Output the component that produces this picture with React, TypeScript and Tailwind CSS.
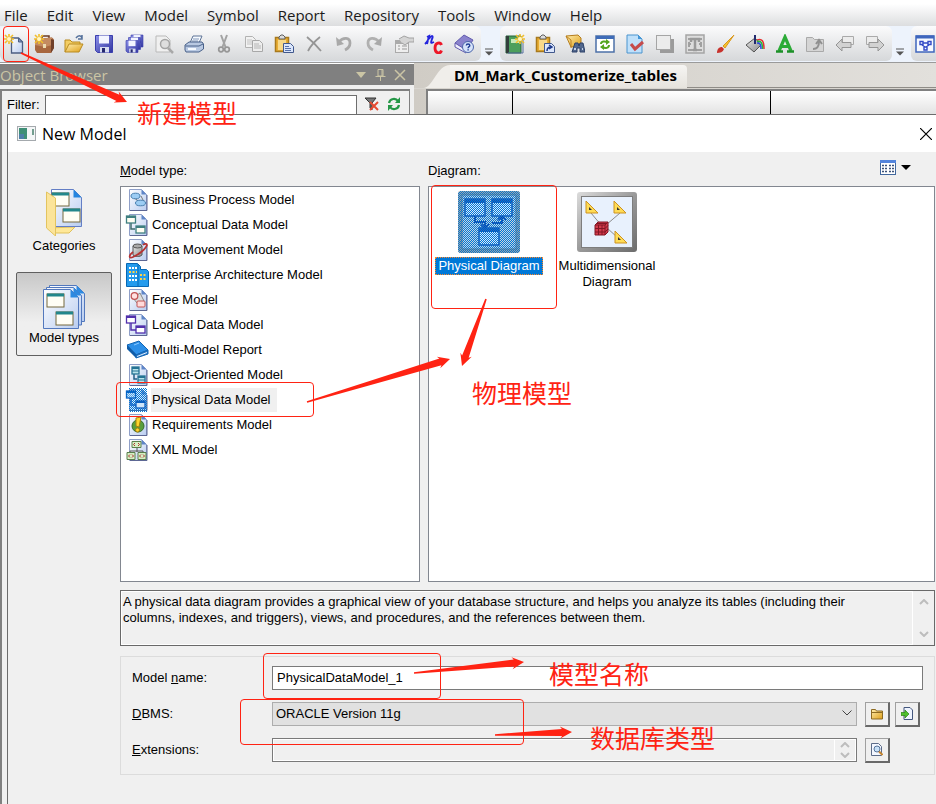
import React from "react";

type IconProps = { children: React.ReactNode; size?: string };

function Icon({ children, size = "size-5" }: IconProps) {
  return (
    <svg viewBox="0 0 20 20" className={`${size} block shrink-0`} fill="none" aria-hidden="true">
      {children}
    </svg>
  );
}

/* Shared gradients and dither patterns */
function Defs() {
  return (
    <svg className="absolute size-0" aria-hidden="true">
      <defs>
        <linearGradient id="paper" x1="0" y1="0" x2="1" y2="1">
          <stop offset="0" stopColor="#ffffff" />
          <stop offset="1" stopColor="#b9cdf0" />
        </linearGradient>
        <linearGradient id="gold" x1="0" y1="0" x2="1" y2="1">
          <stop offset="0" stopColor="#ffeeb0" />
          <stop offset="1" stopColor="#dfa019" />
        </linearGradient>
        <linearGradient id="violet" x1="0" y1="0" x2="1" y2="1">
          <stop offset="0" stopColor="#8f93ea" />
          <stop offset="1" stopColor="#3034a0" />
        </linearGradient>
        <linearGradient id="silver" x1="0" y1="0" x2="1" y2="1">
          <stop offset="0" stopColor="#e8e8e8" />
          <stop offset="1" stopColor="#8c8c8c" />
        </linearGradient>
        <linearGradient id="frame" x1="0" y1="0" x2="1" y2="1">
          <stop offset="0" stopColor="#dcdcdc" />
          <stop offset="0.5" stopColor="#9a9a9a" />
          <stop offset="1" stopColor="#6c6c6c" />
        </linearGradient>
        <pattern id="dither" width="2" height="2" patternUnits="userSpaceOnUse">
          <rect width="1" height="1" fill="#0078d7" />
          <rect x="1" y="1" width="1" height="1" fill="#0078d7" />
        </pattern>
      </defs>
    </svg>
  );
}

const Spark = ({ x = 5, y = 5 }: { x?: number; y?: number }) => (
  <g transform={`translate(${x} ${y})`}>
    <path d="M0-5V5M-5 0H5M-4-4L4 4M4-4L-4 4" stroke="#f2bf2c" strokeWidth="1.6" />
    <circle r="2" fill="#fff6c4" />
  </g>
);

const NewModel = () => (
  <Icon>
    <path d="M7.500 4h7l4 4v11h-11z" fill="url(#paper)" stroke="#4c5f83" strokeWidth="1.300" />
    <path d="M14.500 4v4h4z" fill="#7e95c0" stroke="#4c5f83" />
    <Spark />
  </Icon>
);
const Briefcase = () => (
  <Icon>
    <path d="M8 4V2h7v2" stroke="#6b3820" strokeWidth="1.500" />
    <path d="M1 5l17-1.500 2 2V14l-3 5H3l-2-3z" fill="#a8673f" />
    <path d="M1 5l17-1.500V11l-7 2-10-2z" fill="#c48a60" />
    <path d="M17 5l3 1v8l-3 5z" fill="#70402a" />
    <rect x="9" y="10" width="3" height="4" fill="#ecd9b0" />
    <Spark x={5} y={5} />
  </Icon>
);
const OpenFolder = () => (
  <Icon>
    <path d="M1 18V6h5l2 2h8v3" fill="#f3cd63" stroke="#b98b20" />
    <path d="M1 18L5 10h14l-4 8z" fill="url(#gold)" stroke="#b98b20" />
    <path d="M12 4c2-3 5-3 6 0m0-3v4h-4" stroke="#55719c" strokeWidth="1.500" />
  </Icon>
);
const Floppy = ({ s = 1, x = 0, y = 0 }: { s?: number; x?: number; y?: number }) => (
  <g transform={`translate(${x} ${y}) scale(${s})`}>
    <path d="M1.500 1.500h17v17h-15l-2-2z" fill="url(#violet)" stroke="#3b3fae" />
    <rect x="5" y="1.500" width="10" height="8" fill="#f3f5ff" />
    <rect x="6" y="13" width="9" height="5.500" fill="#d7dcf0" />
    <rect x="8" y="14" width="3" height="4.500" fill="#25286f" />
  </g>
);
const Save = () => <Icon><Floppy /></Icon>;
const SaveAll = () => (
  <Icon>
    <Floppy s={0.7} x={6} y={0} />
    <Floppy s={0.7} x={3.5} y={2.5} />
    <Floppy s={0.7} x={1} y={5.5} />
  </Icon>
);
const Preview = () => (
  <Icon>
    <path d="M2 2h10l4 4v12H2z" fill="#f0f0f0" stroke="#b9b9b9" />
    <circle cx="11" cy="10" r="4.500" fill="#dedede" stroke="#a4a4a4" strokeWidth="1.500" />
    <path d="M14 14l5 5" stroke="#a8a8a8" strokeWidth="2.500" />
  </Icon>
);
const Printer = () => (
  <Icon>
    <path d="M6 9l3-7h9l-3 7z" fill="#f6faff" stroke="#5d7396" />
    <path d="M8 7h6M9 5h6" stroke="#8196b8" />
    <path d="M1 11l4-3h13l1.500 2v5L15 18H2l-1-2z" fill="#b9c9e2" stroke="#496189" />
    <path d="M1.500 12H15l4-2" stroke="#496189" />
    <path d="M4 15h8" stroke="#f6faff" strokeWidth="2" />
  </Icon>
);
const Cut = () => (
  <Icon>
    <path d="M7 1l4.500 12M13 1L8.500 13" stroke="#a3a3a3" strokeWidth="2" />
    <circle cx="7" cy="15.500" r="2.300" stroke="#979797" strokeWidth="1.700" />
    <circle cx="13" cy="15.500" r="2.300" stroke="#979797" strokeWidth="1.700" />
  </Icon>
);
const Copy = () => (
  <Icon>
    <path d="M1.500 2.500h7l3 3v8h-10z" fill="#f2f2f2" stroke="#b2b2b2" />
    <path d="M3 6h5M3 8h5M3 10h5" stroke="#c2c2c2" />
    <path d="M8.500 6.500h7l3 3v8h-10z" fill="#ededed" stroke="#a8a8a8" />
    <path d="M10 10h5M10 12h7M10 14h7" stroke="#b5b5b5" />
  </Icon>
);
const Paste = ({ link = false }: { link?: boolean }) => (
  <Icon>
    <path d="M1.500 3.500h13v14h-13z" fill="#e9ae35" stroke="#a87a1d" strokeWidth="1.500" />
    <path d="M4 6h8v10H4z" fill="#f8d98a" />
    <path d="M5 5V3l2-2h2l2 2v2z" fill="#dcdcdc" stroke="#5f5f5f" />
    <path d="M9.500 9.500h7l3 3v6h-10z" fill="#dbe6fb" stroke="#41588c" />
    {link ? (
      <path d="M12 17c0-3 1-4 4-4m-2-2l3 2-3 2" stroke="#203b8c" strokeWidth="1.500" />
    ) : (
      <path d="M11 12.500h4M11 14.500h6M11 16.500h6" stroke="#5872ab" />
    )}
  </Icon>
);
const Delete = () => (
  <Icon>
    <path d="M3 3c5 4 9 8 14 14M16 3C11 7 7 11 4 17" stroke="#959595" strokeWidth="1.800" />
  </Icon>
);
const Undo = () => (
  <Icon>
    <path d="M5 8c4-5 11-5 11 1 0 4-3 6-5 7" stroke="#a9a9a9" strokeWidth="2.800" />
    <path d="M2 3l1 9 7-2z" fill="#a9a9a9" />
  </Icon>
);
const Redo = () => (
  <Icon>
    <path d="M15 8C11 3 4 3 4 9c0 4 3 6 5 7" stroke="#b0b0b0" strokeWidth="2.800" />
    <path d="M18 3l-1 9-7-2z" fill="#a9a9a9" />
  </Icon>
);
const Properties = () => (
  <Icon>
    <rect x="1.500" y="6.500" width="13" height="12" fill="#eee" stroke="#aaa" />
    <path d="M2 8.500h12" stroke="#aaa" strokeWidth="3" />
    <path d="M4 12h2m2 0h5M4 15h2m2 0h5" stroke="#999" />
    <path d="M5 5l5-3 5 2h5v4h-5l-4 3-3-2" fill="#d5d5d5" stroke="#a3a3a3" />
  </Icon>
);
const NameCode = () => (
  <Icon>
    <path d="M1 10C3 8 5 4 5 2M3 3l2-1-2 8M5 5c2-4 5-4 3 0-1 3-2 5 2 3" stroke="#2424dd" strokeWidth="1.900" />
    <path d="M17.500 11c-1-3-6.500-3-6.500 3s5.500 6 6.500 2.500" stroke="#ed1728" strokeWidth="2.800" />
  </Icon>
);
const HelpBook = () => (
  <Icon>
    <path d="M1 9L10 1l9 5-7 11z" fill="#8a83cd" stroke="#625bae" />
    <path d="M1 9v4l11 6v-3z" fill="#eeeefc" stroke="#625bae" />
    <circle cx="14" cy="13" r="5.500" fill="#d6e3fa" stroke="#4c66aa" />
    <path d="M12.300 11.500c0-2 3.500-2 3.500 0 0 1.300-1.700 1-1.700 2.700m0 1v1.200" stroke="#213e97" strokeWidth="1.400" />
  </Icon>
);
const NewDiagram = () => (
  <Icon>
    <path d="M1 2h15v17H1z" fill="#4c9f5c" stroke="#24653a" />
    <path d="M1 2h3v17H1z" fill="#333e3a" />
    <path d="M6 5h8v4H6z" fill="#c6e8b8" />
    <path d="M16 4l2 2v13H3" stroke="#5670a0" />
    <Spark x={15} y={5} />
  </Icon>
);
const Find = () => (
  <Icon>
    <path d="M1 2l12-1 3 3v8l-10 1z" fill="url(#gold)" stroke="#b47d1e" />
    <path d="M1 2l5 4v8" stroke="#bd801e" />
    <path d="M7 18l3-9h3l1 3 1-3h3l2 9h-5v-4h-3v4z" fill="#52688e" stroke="#2c4168" />
    <path d="M9 15h2m6 0h1" stroke="#c3d1ea" strokeWidth="2" />
  </Icon>
);
const Refresh = () => (
  <Icon>
    <rect x="1" y="2" width="18" height="16" fill="#fff" stroke="#4c70a8" strokeWidth="1.500" />
    <path d="M1 3.500h18" stroke="#3f6cb8" strokeWidth="3" />
    <path d="M6 10c0-3 4-3 6-2m2 3c0 3-4 4-6 2" stroke="#55a620" strokeWidth="2" />
    <path d="M11 5l4 3-4 3zM9 10l-4 3 4 3z" fill="#55a620" />
  </Icon>
);
const Check = () => (
  <Icon>
    <path d="M2 1h11l4 4v14H2z" fill="#bfe0fa" stroke="#4a94ce" />
    <path d="M13 1v4h4z" fill="#4597d8" />
    <path d="M6 10l4 5 8-7" stroke="#c54b4b" strokeWidth="3" />
  </Icon>
);
const Shadow = () => (
  <Icon>
    <path d="M5 5h14v14H5z" fill="#9b9b9b" />
    <rect x="1.500" y="1.500" width="14" height="14" fill="#ececec" stroke="#a5a5a5" />
  </Icon>
);
const TextBox = () => (
  <Icon>
    <rect x="1" y="1" width="18" height="18" fill="#ddd" stroke="#a5a5a5" strokeWidth="1.500" />
    <path d="M3 5h14M3 16h14M4 8v5m12-5v5M3 10h3m8 0h3" stroke="#a0a0a0" strokeWidth="2" />
    <path d="M6 8V5h8v3m-4-3v11m-2 0h4" stroke="#9a9a9a" strokeWidth="2.500" />
  </Icon>
);
const Brush = () => (
  <Icon>
    <path d="M19 1L8 12l2 2z" fill="#f5c22f" stroke="#d9971b" />
    <path d="M2 19c0-4 2-6 5-6l2 2c-1 3-4 4-7 4z" fill="#c8322c" />
  </Icon>
);
const Bucket = () => (
  <Icon>
    <path d="M1 11l9-7 6 7-7 7z" fill="url(#silver)" stroke="#555" />
    <path d="M10 10V1" stroke="#222a6e" strokeWidth="2" />
    <path d="M12 6c5-2 7 1 7 9" stroke="#e53131" strokeWidth="1.500" />
    <path d="M12 7.500c4-1 5.500 1 5.500 7.500" stroke="#24b83d" strokeWidth="1.500" />
    <path d="M12 9c3 0 4 1 4 6" stroke="#2b49e0" strokeWidth="1.500" />
  </Icon>
);
const FontA = () => (
  <Icon>
    <path d="M4 17L10 3l6 14M6.500 12.500h7" stroke="#2cab37" strokeWidth="3.200" />
    <path d="M1 17.500h7m4 0h7" stroke="#1c9027" strokeWidth="2.400" />
  </Icon>
);
const FolderUp = () => (
  <Icon>
    <path d="M1.500 17.500v-14h6l2 2h9v12z" fill="#d5d5d5" stroke="#a9a9a9" />
    <path d="M8 15c5 0 6-3 6-8m-3 3l3-4 3 4" stroke="#909090" strokeWidth="2" />
  </Icon>
);
const BackArrow = ({ flip = false }: { flip?: boolean }) => (
  <Icon>
    <g transform={flip ? "translate(20 0) scale(-1 1)" : undefined}>
      <path d="M7.500 2.500h11v8h-11z" fill="#ececec" stroke="#aaa" />
      <path d="M1 11l6-6v3.500h9v5H7V17z" fill="#d2d2d2" stroke="#959595" />
    </g>
  </Icon>
);
const DiagramWindow = () => (
  <Icon>
    <rect x="1" y="2" width="18" height="16" fill="#f6f9ff" stroke="#3f66bd" strokeWidth="1.500" />
    <path d="M1 3h18" stroke="#3f66bd" strokeWidth="3" />
    <path d="M5 7.500h3v3H5zM13 7.500h3v3h-3zM9 13h3v3H9zM8 9h5m-6 2l3 2m4-2l-3 2" stroke="#334ac6" strokeWidth="1.400" />
  </Icon>
);

const mainTools: [string, React.ReactNode][] = [
  ["New Model", <NewModel />], ["New Project", <Briefcase />], ["Open", <OpenFolder />],
  ["Save", <Save />], ["Save All", <SaveAll />], ["Print Preview", <Preview />],
  ["Print", <Printer />], ["Cut", <Cut />], ["Copy", <Copy />], ["Paste", <Paste />],
  ["Delete", <Delete />], ["Undo", <Undo />], ["Redo", <Redo />],
  ["Properties", <Properties />], ["Name or Code", <NameCode />], ["Help", <HelpBook />],
];
const diagramTools: [string, React.ReactNode][] = [
  ["New Diagram", <NewDiagram />], ["Paste as Shortcut", <Paste link />], ["Find Objects", <Find />],
  ["Refresh", <Refresh />], ["Check Model", <Check />], ["Shadow", <Shadow />],
  ["Text Size", <TextBox />], ["Line Style", <Brush />], ["Fill", <Bucket />],
  ["Font", <FontA />], ["Up One Level", <FolderUp />], ["Previous", <BackArrow />],
  ["Next", <BackArrow flip />],
];

function ToolGroup({ tools, className }: { tools: [string, React.ReactNode][]; className: string }) {
  return (
    <div className={`flex h-[35px] shrink-0 items-center gap-2.5 rounded-md bg-linear-to-b from-[#fbfbfc] to-[#d6d8da] ${className}`}>
      {tools.map(([name, icon]) => (
        <button key={name} type="button" aria-label={name}>{icon}</button>
      ))}
    </div>
  );
}

function Overflow() {
  return (
    <button type="button" aria-label="More buttons" className="flex w-[19px] shrink-0 justify-center pt-[22px] pr-1">
      <svg viewBox="0 0 8 8" className="size-2" aria-hidden="true">
        <path d="M0 1h8" stroke="#555" />
        <path d="M0 3.500h8L4 7.500z" fill="#555" />
      </svg>
    </button>
  );
}

/* Model-type list icons, drawn on a 24x24 grid */
const Page = () => (
  <>
    <path d="M4.500 1.500h12l5 5v16h-17z" fill="url(#paper)" stroke="#8f9fc8" />
    <path d="M16.500 1.500v5h5z" fill="#5f86c8" />
    <path d="M5 22.500h17V7" stroke="#5d6794" />
  </>
);
const Win = ({ x, y, w = 9, h = 7, c = "#3f7f80", f = "#fffef2" }: { x: number; y: number; w?: number; h?: number; c?: string; f?: string }) => (
  <>
    <rect x={x} y={y} width={w} height={h} fill={f} stroke={c} strokeWidth="1.300" />
    <path d={`M${x} ${y + 1}h${w}`} stroke={c} strokeWidth="2" />
  </>
);

const modelTypes: { name: string; icon: React.ReactNode }[] = [
  {
    name: "Business Process Model",
    icon: <><Page /><path d="M8 9l8 6M16 8l3 6-7 1" stroke="#777" /><ellipse cx="10.500" cy="8" rx="4.500" ry="2.800" fill="#9ccdf4" stroke="#477fae" /><ellipse cx="15.500" cy="15" rx="5" ry="2.800" fill="#9ccdf4" stroke="#477fae" /></>,
  },
  {
    name: "Conceptual Data Model",
    icon: <><Page /><path d="M6 9v7h4" stroke="#3f6c6c" strokeWidth="1.500" /><Win x={1.5} y={3} /><Win x={11} y={13} /></>,
  },
  {
    name: "Data Movement Model",
    icon: <><Page /><path d="M8 8v9c2 2 7 2 9 0V8z" fill="url(#silver)" stroke="#555" /><ellipse cx="12.500" cy="8" rx="4.500" ry="2" fill="#aaa" stroke="#555" /><path d="M8 14c-5 4-4 7 0 5 5-2 13-8 14-12 0-2-3-1-4 0" stroke="#b63232" strokeWidth="1.700" /></>,
  },
  {
    name: "Enterprise Architecture Model",
    icon: <><path d="M1.500.500h11l3 3v3h6l2 2v15h-22z" fill="#249bed" stroke="#0868b4" /><path d="M13 1v22" stroke="#0868b4" /><path d="M4 5h8M4 13h8M4 17h8" stroke="#fff" strokeWidth="2" strokeDasharray="2 1" /><path d="M4 9h8M15 12h7M15 16h7" stroke="#ffd449" strokeWidth="2" strokeDasharray="2 1.500" /></>,
  },
  {
    name: "Free Model",
    icon: <><Page /><path d="M15 5l4 8-7 2-4-5z" fill="#ddd" stroke="#888" /><circle cx="9.500" cy="8" r="3.300" fill="#ffe1e1" stroke="#c25454" strokeWidth="1.300" /><rect x="12" y="13" width="8" height="6" rx="1" fill="#ffdada" stroke="#c25454" /></>,
  },
  {
    name: "Logical Data Model",
    icon: <><Page /><path d="M6 9v8h5" stroke="#5130ac" strokeWidth="1.500" /><Win x={1.5} y={3} c="#5130ac" f="#fff" /><Win x={11} y={13} c="#5130ac" f="#fff" /></>,
  },
  {
    name: "Multi-Model Report",
    icon: <><path d="M2 7l12-4 9 9-12 5z" fill="#2c8fe8" stroke="#1265b3" /><path d="M2 7v4l9 9v-4z" fill="#0f5ca8" /><path d="M11 17l12-5v4l-12 4z" fill="#2476c8" stroke="#1265b3" /><path d="M12 18.500l10-4" stroke="#e5effa" /><path d="M9 7l5-2" stroke="#8fcbff" /></>,
  },
  {
    name: "Object-Oriented Model",
    icon: <><Page /><path d="M9 11v5h3" stroke="#235f86" strokeWidth="1.500" /><Win x={7} y={4} w={7} h={7} c="#257394" f="#b9e3ea" /><path d="M7 8h7" stroke="#257394" /><Win x={13} y={13} w={7} h={7} c="#257394" f="#b9e3ea" /><path d="M13 17h7" stroke="#257394" /></>,
  },
  {
    name: "Physical Data Model",
    icon: <><Page /><path d="M6 9v8h5" stroke="#1d4fb8" strokeWidth="1.500" /><rect x="4" y="0" width="18" height="24" fill="url(#dither)" /><Win x={1.5} y={3} c="#0a5fc0" f="#cfe5fa" /><Win x={11} y={13} c="#0a5fc0" f="#cfe5fa" /><rect x="1" y="3" width="10" height="7" fill="url(#dither)" opacity="0.600" /></>,
  },
  {
    name: "Requirements Model",
    icon: <><Page /><circle cx="13" cy="13" r="6" fill="#5a9e3c" stroke="#376c2c" /><path d="M11 5l5-1-2 10-3-1z" fill="#ffd52e" stroke="#a9810d" /><circle cx="12.500" cy="17" r="2" fill="#ffd52e" stroke="#a9810d" /></>,
  },
  {
    name: "XML Model",
    icon: <><Page /><path d="M12 9v5m-7 1v-2h13v2" stroke="#555" /><path d="M7 3.500h9v6H7zM2 14.500h8v7H2zM13 14.500h8v7h-8z" fill="#d6f0c4" stroke="#5a7f4c" /><path d="M10 5L8.500 6.500 10 8m3-3l1.500 1.500L13 8M5 16.500L3.500 18 5 19.500m2-3L8.500 18 7 19.500m9-3L14.500 18l1.500 1.500m2-3l1.500 1.500-1.500 1.500" stroke="#b03030" /></>,
  },
];

function PhysicalPicture() {
  return (
    <svg viewBox="0 0 62 62" className="size-[62px]" fill="none" aria-hidden="true">
      <rect width="62" height="62" rx="3" fill="#a3a3a3" />
      <rect x="4" y="4" width="54" height="54" fill="#c7d3df" stroke="#808080" />
      <path d="M17 25v6h10v6M34 32h10v-7M40 29l4-4 4 4M23 33l4 4 4-4" stroke="#1940a5" strokeWidth="2" />
      {[[7, 8], [34, 8], [21, 37]].map(([x, y]) => (
        <g key={`${x}-${y}`}>
          <rect x={x} y={y} width="20" height="17" fill="#d8e8fb" stroke="#1646a8" strokeWidth="1.500" />
          <path d={`M${x} ${y + 2}h20`} stroke="#1b4fae" strokeWidth="4" />
        </g>
      ))}
      <rect width="62" height="62" rx="3" fill="url(#dither)" />
    </svg>
  );
}

function MultiPicture() {
  return (
    <svg viewBox="0 0 62 62" className="size-[62px]" fill="none" aria-hidden="true">
      <rect x="1" y="1" width="60" height="60" rx="3" fill="url(#frame)" />
      <rect x="5.500" y="5.500" width="51" height="51" fill="#e8f1fd" stroke="#7d7d7d" />
      <path d="M15 22l10 12M44 22L30 34M30 36l12 11" stroke="#8b8b8b" />
      {[[10, 10], [38, 10], [39, 40]].map(([x, y]) => (
        <g key={`${x}-${y}`}>
          <path d={`M${x} ${y}v12h12z`} fill="#ffdc55" stroke="#cc9222" />
          <path d={`M${x + 3} ${y + 6}v3h3z`} fill="#333" />
        </g>
      ))}
      <path d="M19 34l3-3h10v10l-3 3H19z" fill="#d33b4c" stroke="#821724" />
      <path d="M19 34h10v10M29 34l3-3M22.500 34v10M26 34v10M19 37.500h10l3-3M19 41h10l3-3M21 32.500h10" stroke="#821724" />
    </svg>
  );
}

const Window = ({ x, y }: { x: number; y: number }) => (
  <g>
    <rect x={x} y={y} width="17" height="13" fill="#fffef5" stroke="#75693c" />
    <path d={`M${x} ${y + 1}h17`} stroke="#22878b" strokeWidth="3" />
  </g>
);

function CategoriesPicture() {
  return (
    <svg viewBox="0 0 48 48" className="size-12" fill="none" aria-hidden="true">
      <path d="M7 40l28-1-6 6H15z" fill="#ffe898" stroke="#dfc15d" />
      <path d="M11.500 1.500h22l8 8v29h-30z" fill="url(#paper)" stroke="#637ec5" />
      <path d="M33.500 1.500v8h8z" fill="#2585df" />
      <Window x={12} y={5} /><Window x={23} y={21} />
      <path d="M6.500 4l9 6v38l-9-8z" fill="#fbe49a" stroke="#e3c45f" />
    </svg>
  );
}

function ModelTypesPicture() {
  return (
    <svg viewBox="0 0 48 48" className="size-12" fill="none" aria-hidden="true">
      {[6, 3, 0].map((d) => (
        <g key={d}>
          <path d={`M${3.5 + d} ${7.5 - d}h27l8 8v${31 - d / 2}h-35z`} transform={`translate(0 ${d / 3})`} fill="url(#paper)" stroke="#5278bd" />
          <path d={`M${30.5 + d} ${7.5 - d}v8h8z`} transform={`translate(0 ${d / 3})`} fill="#2c8ae1" />
        </g>
      ))}
      <Window x={7} y={12} /><Window x={16} y={30} />
    </svg>
  );
}

/* Tapered red pointer running from (x1,y1) to its tip at (x2,y2) */
function Pointer({ x1, y1, x2, y2 }: { x1: number; y1: number; x2: number; y2: number }) {
  const len = Math.hypot(x2 - x1, y2 - y1);
  const ux = (x2 - x1) / len;
  const uy = (y2 - y1) / len;
  const at = (along: number, side: number) =>
    `${x1 + ux * along - uy * side},${y1 + uy * along + ux * side}`;
  const pts = [at(0, -0.8), at(len - 10, -3.5), at(len - 12, -6), at(len, 0), at(len - 12, 6), at(len - 10, 3.5), at(0, 0.8)];
  return <polygon points={pts.join(" ")} fill="#ff2313" />;
}

const Chevron = ({ down = false, className = "text-[#bdbdbd]" }: { down?: boolean; className?: string }) => (
  <svg viewBox="0 0 10 6" className={`h-1.5 w-2.5 ${className}`} fill="none" aria-hidden="true">
    <path d={down ? "M1 1l4 4 4-4" : "M1 5l4-4 4 4"} stroke="currentColor" strokeWidth="2" />
  </svg>
);

const raised =
  "flex size-[25px] shrink-0 items-center justify-center border border-r-2 border-b-2 border-[#a0a0a0] border-r-[#696969] border-b-[#696969] bg-[#f0f0f0]";
const note =
  "pointer-events-none absolute font-['Noto_Sans_CJK_SC',sans-serif] text-[25px] leading-8 whitespace-nowrap text-[#ff2313]";
const mark = "pointer-events-none absolute rounded-[4px] border border-[#ff2313]";
const ui = "font-['Open_Sans',sans-serif]";

export default function App() {
  return (
    <div className="relative flex h-screen flex-col overflow-hidden bg-[#a0a0a0] font-['Liberation_Sans',Arial,sans-serif] text-[13px] leading-4 text-black">
      <Defs />
      <nav className={`flex h-[26px] shrink-0 items-end bg-linear-to-b from-white from-15% to-[#dcdddf] pl-1 text-[15px] leading-[21px] text-[#1b1b1b] ${ui}`}>
        <div className="flex gap-[19px]">
          {["File", "Edit", "View", "Model", "Symbol", "Report", "Repository", "Tools", "Window", "Help"].map((m) => (
            <button key={m} type="button">{m}</button>
          ))}
        </div>
      </nav>
      <div className="flex h-[37px] shrink-0 items-start overflow-hidden border-b border-[#9a9a9a] bg-[#edf3fc]">
        <ToolGroup tools={mainTools} className="w-[481px] pl-1" />
        <Overflow />
        <ToolGroup tools={diagramTools} className="w-[392px] pl-[5px]" />
        <Overflow />
        <ToolGroup tools={[["Diagram", <DiagramWindow />]]} className="min-w-[36px] flex-1 pl-1" />
      </div>

      <div className="flex min-h-0 flex-1">
        <aside className="flex w-[414px] shrink-0 flex-col border-t border-white bg-[#f0f0f0]">
          <header className="flex h-[21px] items-center justify-between bg-[#808080] pr-2 text-[#cbc5a5]">
            <h2 className={`text-[15px] leading-5 ${ui}`}>Object Browser</h2>
            <div className="flex items-center gap-2">
              <button type="button" aria-label="Panel menu">
                <svg viewBox="0 0 10 6" className="h-1.5 w-2.5"><path d="M0 0h10L5 6z" fill="currentColor" /></svg>
              </button>
              <button type="button" aria-label="Pin">
                <svg viewBox="0 0 12 14" className="h-3.5 w-3" fill="none"><path d="M4 1.500h5V8H4zM8 2v6M1.500 8.500h10M6.500 9v4" stroke="currentColor" /></svg>
              </button>
              <button type="button" aria-label="Close panel">
                <svg viewBox="0 0 12 12" className="size-3" fill="none"><path d="M1 1l10 10M11 1L1 11" stroke="currentColor" strokeWidth="1.500" /></svg>
              </button>
            </div>
          </header>
          <div className="mt-1 mr-1 flex flex-1 items-start border-t-2 border-r border-l-2 border-[#808080] pt-1 pl-[5px]">
            <label htmlFor="filter" className="w-[38px] pt-0.5">Filter:</label>
            <input id="filter" className="h-[22px] w-[312px] border border-[#6e6e6e] bg-white" />
            <div className="flex gap-2 pt-0.5 pl-2">
              <button type="button" aria-label="Clear filter">
                <svg viewBox="0 0 14 14" className="size-3.5" fill="none"><path d="M0 1h11L7 6v7L5 11V6z" fill="#777" stroke="#333" /><path d="M5 5l8 8M13 5l-8 8" stroke="#e64a30" strokeWidth="2" /></svg>
              </button>
              <button type="button" aria-label="Refresh tree">
                <svg viewBox="0 0 14 14" className="size-3.5" fill="none"><path d="M2 6c1-5 7-5 9-2M12 8c-1 5-7 5-9 2" stroke="#259747" strokeWidth="2.200" /><path d="M13 0v6H8zM1 14V8h5z" fill="#259747" /></svg>
              </button>
            </div>
          </div>
        </aside>
        <main className="flex min-w-0 flex-1 flex-col bg-linear-to-r from-[#d0ccc5] to-[#e2e0dc]">
          <div className="flex h-[26px] shrink-0 items-stretch border-b border-[#d8d5cf] pt-0.5 pl-2.5">
            <svg viewBox="0 0 26 23" className="h-[23px] w-[26px] shrink-0" aria-hidden="true">
              <path d="M0 23C10 21 13 0 26 0v23z" fill="#f0eeea" />
            </svg>
            <button type="button" className={`h-[23px] rounded-tr bg-linear-to-b from-[#f6f5f3] to-[#e6e3dd] pr-2.5 pb-1 pl-1 text-[15px] leading-5 font-bold ${ui}`}>
              DM_Mark_Customerize_tables
            </button>
            <div className="flex-1 border-b border-[#8f8c87]" />
          </div>
          <div className="ml-3 flex flex-1 border-t-2 border-l-2 border-[#808080]">
            <div className="h-[23px] w-[85px] border-r border-black bg-linear-to-b from-white to-[#e3e3e3]" />
            <div className="h-[23px] w-[258px] border-r border-black bg-linear-to-b from-white to-[#e3e3e3]" />
            <div className="h-[23px] flex-1 bg-linear-to-b from-white to-[#e3e3e3]" />
          </div>
        </main>
      </div>

      <section role="dialog" aria-label="New Model" className="absolute top-[114px] right-0 bottom-0 left-[7px] flex flex-col border-t border-l border-[#6c6c6c] bg-[#f0f0f0]">
        <header className="flex h-[37px] shrink-0 items-center bg-white pr-1 pl-[9px]">
          <svg viewBox="0 0 19 15" className="h-[15px] w-[19px]" fill="none" aria-hidden="true">
            <rect x="0.500" y="0.500" width="18" height="14" fill="#f4f6f7" stroke="#a4a9ad" />
            <path d="M2 2h8v11H2z" fill="#3f8f76" /><path d="M2 8h5v5H2z" fill="#4e7fa8" />
            <path d="M16 3v6" stroke="#49816c" strokeWidth="1.500" />
          </svg>
          <h1 className={`flex-1 pl-1.5 text-base leading-6 ${ui}`}>New Model</h1>
          <button type="button" aria-label="Close">
            <svg viewBox="0 0 12 12" className="size-3" fill="none"><path d="M0 0l12 12M12 0L0 12" stroke="#000" strokeWidth="1.200" /></svg>
          </button>
        </header>
        <div className="flex min-h-0 flex-1 gap-2 pr-px pb-[29px] pl-2">
          <div className="flex w-24 shrink-0 flex-col gap-[18px] pt-9">
            <button type="button" className="flex h-[66px] flex-col items-center gap-0.5">
              <CategoriesPicture />
              <span>Categories</span>
            </button>
            <button type="button" aria-pressed="true" className="flex h-[84px] flex-col items-center rounded-[2px] border border-[#606060] bg-linear-to-b from-[#c8c8c8] to-[#efefef] to-60% pt-[9px]">
              <ModelTypesPicture />
              <span>Model types</span>
            </button>
          </div>

          <div className="flex min-w-0 flex-1 flex-col gap-2">
            <div className="flex min-h-0 flex-1 gap-2">
              <div className="flex w-[300px] shrink-0 flex-col">
                <h2 className="flex h-[34px] items-end pb-[7px]"><span><u>M</u>odel type:</span></h2>
                <ul className="min-h-0 flex-1 border border-[#828790] bg-white pl-1">
                  {modelTypes.map(({ name, icon }) => (
                    <li key={name} className="h-[25px]">
                      <button type="button" className="flex h-[25px] items-center">
                        <svg viewBox="0 0 24 24" className="mr-0.5 size-6" fill="none" aria-hidden="true">{icon}</svg>
                        <span className={name === "Physical Data Model" ? "bg-[#f0f0f0] py-1 pr-1.5 pl-px" : "pl-px"}>{name}</span>
                      </button>
                    </li>
                  ))}
                </ul>
              </div>
              <div className="flex min-w-0 flex-1 flex-col">
                <div className="flex h-[34px] items-end justify-between pb-[7px]">
                  <h2>D<u>i</u>agram:</h2>
                  <button type="button" aria-label="View style" className="flex items-center gap-[5px] pr-6 pb-1">
                    <svg viewBox="0 0 16 15" className="h-[15px] w-4" fill="none" aria-hidden="true">
                      <rect x="0.500" y="0.500" width="15" height="14" fill="#fff" stroke="#41679d" />
                      <path d="M0 1.500h16" stroke="#5384dc" strokeWidth="3" />
                      <path d="M2 5.500h6M2 8.500h6M2 11.500h6M9 5.500h6M9 8.500h6M9 11.500h6" stroke="#3c5279" strokeDasharray="2 1 2 2" strokeWidth="1.500" />
                    </svg>
                    <svg viewBox="0 0 10 5" className="h-[5px] w-2.5"><path d="M0 0h10L5 5z" fill="#000" /></svg>
                  </button>
                </div>
                <div className="flex min-h-0 flex-1 items-start gap-2.5 border border-[#828790] bg-white pt-1 pl-[5px]">
                  <button type="button" className="flex w-[110px] flex-col items-center gap-1">
                    <PhysicalPicture />
                    <span className="border border-dotted border-[#ff8728] bg-[#0078d7] px-0.5 text-white">Physical Diagram</span>
                  </button>
                  <button type="button" className="flex w-[106px] flex-col items-center gap-[5px]">
                    <MultiPicture />
                    <span>Multidimensional<br />Diagram</span>
                  </button>
                </div>
              </div>
            </div>

            <div className="flex h-14 shrink-0 border border-[#696969] bg-[#f0f0f0]">
              <textarea
                aria-label="Description"
                readOnly
                className="min-w-0 flex-1 resize-none overflow-hidden border border-white py-0.5 pr-6 pl-px outline-none"
                value="A physical data diagram provides a graphical view of your database structure, and helps you analyze its tables (including their columns, indexes, and triggers), views, and procedures, and the references between them."
              />
              <div className="flex w-[21px] flex-col items-center justify-between py-2">
                <button type="button" aria-label="Scroll up"><Chevron /></button>
                <button type="button" aria-label="Scroll down"><Chevron down /></button>
              </div>
            </div>

            <form className="mt-0.5 flex h-[119px] shrink-0 flex-col gap-3 border border-[#dcdcdc] pt-[9px] pr-[11px] pl-[11px]">
              <div className="flex h-6 items-center">
                <label htmlFor="name" className="w-[140px] shrink-0">Model <u>n</u>ame:</label>
                <input id="name" defaultValue="PhysicalDataModel_1" className="h-6 min-w-0 flex-1 border border-[#7a7a7a] bg-white px-1 pb-0.5 outline-none" />
              </div>
              <div className="flex h-6 items-center">
                <label htmlFor="dbms" className="w-[140px] shrink-0"><u>D</u>BMS:</label>
                <div className="relative min-w-0 flex-1">
                  <select id="dbms" className="block h-6 w-full appearance-none border border-[#adadad] bg-[#e1e1e1] px-[3px] outline-none">
                    <option>ORACLE Version 11g</option>
                  </select>
                  <span className="pointer-events-none absolute top-2 right-[5px]">
                    <svg viewBox="0 0 10 6" className="h-1.5 w-2.5" fill="none"><path d="M.500.500l4.500 4.500 4.500-4.500" stroke="#444" /></svg>
                  </span>
                </div>
                <div className="flex w-[66px] shrink-0 gap-[5px] pl-2">
                  <button type="button" aria-label="Browse" className={raised}>
                    <svg viewBox="0 0 12 12" className="size-3"><path d="M.500 11V1.500h4l1 1.500h6v8z" fill="url(#gold)" stroke="#8d6b22" /><path d="M1 4.500h10" stroke="#8d6b22" /></svg>
                  </button>
                  <button type="button" aria-label="Import" className={raised}>
                    <svg viewBox="0 0 12 13" className="h-[13px] w-3" fill="none"><path d="M3 .500h6l2.500 2.500v9.500H3z" fill="#eef4ff" stroke="#44577e" /><path d="M0 5.500h4V3l4 4-4 4V8.500H0z" fill="#4fc02e" stroke="#2b8316" strokeWidth="0.700" /></svg>
                  </button>
                </div>
              </div>
              <div className="flex h-6 items-center">
                <label htmlFor="ext" className="w-[140px] shrink-0"><u>E</u>xtensions:</label>
                <div className="flex h-6 min-w-0 flex-1 border border-[#7a7a7a]">
                  <input id="ext" readOnly className="min-w-0 flex-1 border border-white bg-[#f0f0f0] outline-none" />
                  <div className="flex w-[21px] flex-col items-center justify-center gap-1 border-y border-r border-white">
                    <button type="button" aria-label="Previous extension"><Chevron className="block text-[#bdbdbd]" /></button>
                    <button type="button" aria-label="Next extension"><Chevron down className="block text-[#bdbdbd]" /></button>
                  </div>
                </div>
                <div className="flex w-[66px] shrink-0 pl-2">
                  <button type="button" aria-label="Select extensions" className={raised}>
                    <svg viewBox="0 0 12 13" className="h-[13px] w-3" fill="none"><path d="M.500.500h7l3 3v9H.500z" fill="#f3f7ff" stroke="#5d6c89" /><circle cx="6" cy="6" r="3" fill="#c8e1f8" stroke="#58759b" /><path d="M8 8.500l3.500 3.500" stroke="#c48430" strokeWidth="2" /></svg>
                  </button>
                </div>
              </div>
            </form>
          </div>
        </div>
      </section>

      {/* Tutorial annotations drawn over the window */}
      <div className={`${mark} top-[26px] left-[3px] h-9 w-[26px]`} />
      <div className={`${mark} top-[185px] left-[431px] h-[124px] w-[126px]`} />
      <div className={`${mark} top-[382px] left-[116px] h-[35px] w-[198px]`} />
      <div className={`${mark} top-[653px] left-[263px] h-[46px] w-[178px]`} />
      <div className={`${mark} top-[699px] left-[240px] h-[46px] w-[284px]`} />
      <svg className="pointer-events-none absolute inset-0 size-full" aria-hidden="true">
        <Pointer x1={21} y1={53} x2={127} y2={102} />
        <Pointer x1={307} y1={402} x2={450} y2={359} />
        <Pointer x1={486} y1={299} x2={462} y2={366} />
        <Pointer x1={414} y1={673} x2={524} y2={662} />
        <Pointer x1={495} y1={735} x2={572} y2={732} />
      </svg>
      <span className={`${note} top-[96px] left-[137px]`}>新建模型</span>
      <span className={`${note} top-[376px] left-[472px]`}>物理模型</span>
      <span className={`${note} top-[657px] left-[549px]`}>模型名称</span>
      <span className={`${note} top-[721px] left-[590px]`}>数据库类型</span>
    </div>
  );
}
